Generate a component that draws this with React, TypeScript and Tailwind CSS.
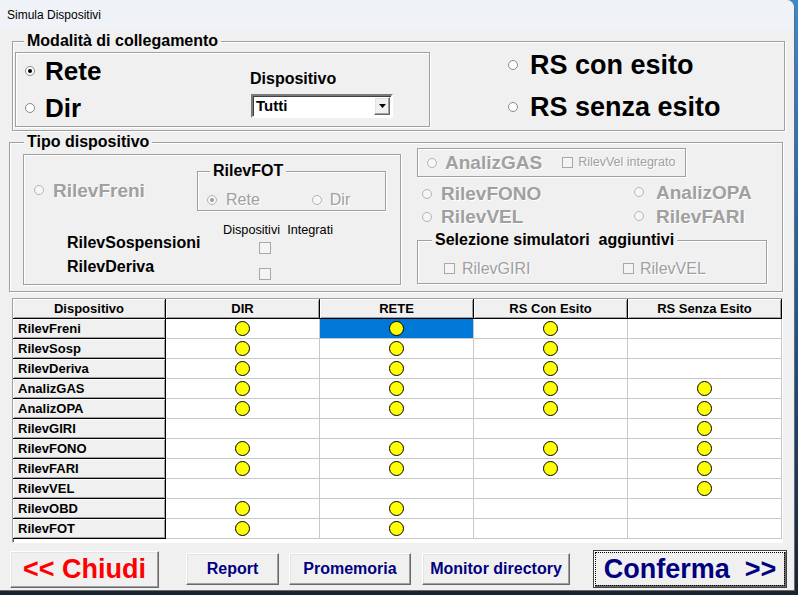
import React from 'react';

const etched = 'border border-[#a0a0a0] shadow-[1px_1px_0_#ffffff,inset_1px_1px_0_#ffffff]';
const bevel =
  'border border-t-white border-l-white border-r-[#696969] border-b-[#696969] bg-[#f0f0f0] shadow-[inset_-1px_-1px_0_#a0a0a0,inset_1px_1px_0_#e3e3e3]';
const grayText = 'text-[#a0a0a0] [text-shadow:1px_1px_0_#ffffff]';

function Radio({ checked = false, disabled = false }: { checked?: boolean; disabled?: boolean }) {
  return (
    <span
      className={`flex h-[10px] w-[10px] shrink-0 items-center justify-center rounded-full border ${
        disabled ? 'border-[#b4b4b4] bg-[#f6f6f6]' : 'border-[#8a8a8a] bg-white'
      }`}
    >
      {checked && (
        <span className={`h-[4px] w-[4px] rounded-full ${disabled ? 'bg-[#a0a0a0]' : 'bg-black'}`} />
      )}
    </span>
  );
}

function Check({ size = 'h-[12px] w-[12px]' }: { size?: string }) {
  return <span className={`block ${size} shrink-0 border border-[#a8a8a8] bg-[#f4f4f4]`} />;
}

function GroupLabel({ text, className }: { text: string; className: string }) {
  return (
    <span
      className={`absolute top-[-10px] whitespace-pre bg-[#f0f0f0] px-[3px] text-[16px] font-bold leading-[18px] text-black ${className}`}
    >
      {text}
    </span>
  );
}

// DIR, RETE, RS con esito, RS senza esito
const rows: [string, number, number, number, number][] = [
  ['RilevFreni', 1, 1, 1, 0],
  ['RilevSosp', 1, 1, 1, 0],
  ['RilevDeriva', 1, 1, 1, 0],
  ['AnalizGAS', 1, 1, 1, 1],
  ['AnalizOPA', 1, 1, 1, 1],
  ['RilevGIRI', 0, 0, 0, 1],
  ['RilevFONO', 1, 1, 1, 1],
  ['RilevFARI', 1, 1, 1, 1],
  ['RilevVEL', 0, 0, 0, 1],
  ['RilevOBD', 1, 1, 0, 0],
  ['RilevFOT', 1, 1, 0, 0],
];

const headers = ['Dispositivo', 'DIR', 'RETE', 'RS Con Esito', 'RS Senza Esito'];

export default function App() {
  return (
    <div className="h-[595px] w-[798px] overflow-hidden bg-linear-to-b from-[#3a8ad0] via-[#1f5a98] to-[#1a2230] font-['Liberation_Sans',Arial,sans-serif] text-black">
      <div className="flex h-[591px] w-[795px] flex-col rounded-tr-[8px] border-r border-b border-[#6a6a6a] bg-[#f0f0f0]">
        {/* barra del titolo */}
        <div className="flex h-[30px] shrink-0 items-center rounded-tr-[8px] bg-[#eff3f8] pl-[7px] text-[12px]">
          Simula Dispositivi
        </div>

        {/* Modalità di collegamento */}
        <div className={`relative ml-[12px] mt-[11px] flex h-[90px] w-[773px] shrink-0 ${etched}`}>
          <GroupLabel text="Modalità di collegamento" className="left-[11px]" />
          <div className={`ml-[2px] mt-[10px] flex h-[75px] w-[415px] ${etched}`}>
            <div className="flex w-[234px] flex-col">
              <div className="flex h-[37px] items-center">
                <span className="ml-[9px]">
                  <Radio checked />
                </span>
                <span className="ml-[10px] text-[26px] font-bold leading-none">Rete</span>
              </div>
              <div className="flex h-[37px] items-center">
                <span className="ml-[9px]">
                  <Radio />
                </span>
                <span className="ml-[10px] text-[26px] font-bold leading-none">Dir</span>
              </div>
            </div>
            <div className="flex flex-col pt-[18px]">
              <span className="text-[16px] font-bold leading-[16px]">Dispositivo</span>
              <div className="ml-[1px] mt-[7px] flex h-[24px] w-[142px] border-2 border-t-[#7a7a7a] border-l-[#7a7a7a] border-r-white border-b-white bg-white shadow-[inset_1px_1px_0_#404040]">
                <span className="flex-1 pl-[3px] text-[15px] font-bold leading-[20px]">Tutti</span>
                <span className={`mr-[1px] mt-[1px] flex h-[18px] w-[16px] items-center justify-center ${bevel}`}>
                  <svg width="7" height="4" viewBox="0 0 7 4">
                    <path d="M0 0h7L3.5 4z" fill="#000" />
                  </svg>
                </span>
              </div>
            </div>
          </div>
          <div className="ml-[78px] mt-[2px] flex flex-col">
            <div className="flex h-[42px] items-center">
              <Radio />
              <span className="ml-[12px] text-[27px] font-bold leading-none">RS con esito</span>
            </div>
            <div className="flex h-[42px] items-center">
              <Radio />
              <span className="ml-[12px] text-[27px] font-bold leading-none">RS senza esito</span>
            </div>
          </div>
        </div>

        {/* Tipo dispositivo */}
        <div className={`relative ml-[9px] mt-[11px] flex h-[150px] w-[774px] shrink-0 items-start ${etched}`}>
          <GroupLabel text="Tipo dispositivo" className="left-[14px]" />
          <div className={`ml-[13px] mt-[11px] flex h-[131px] w-[378px] flex-col ${etched}`}>
            <div className="flex h-[56px]">
              <div className="flex w-[173px] items-center pt-[14px]">
                <span className="ml-[10px]">
                  <Radio disabled />
                </span>
                <span className={`ml-[9px] text-[19px] font-bold leading-none ${grayText}`}>RilevFreni</span>
              </div>
              <div className={`relative mt-[16px] h-[40px] w-[189px] ${etched}`}>
                <GroupLabel text="RilevFOT" className="left-[12px]" />
                <div className="mt-[21px] flex h-[14px] items-center">
                  <span className="ml-[9px]">
                    <Radio checked disabled />
                  </span>
                  <span className={`ml-[9px] text-[16px] leading-none ${grayText}`}>Rete</span>
                  <span className="ml-[52px]">
                    <Radio disabled />
                  </span>
                  <span className={`ml-[8px] text-[16px] leading-none ${grayText}`}>Dir</span>
                </div>
              </div>
            </div>
            <div className="flex">
              <div className="flex w-[199px] flex-col pl-[43px] pt-[20px]">
                <span className="h-[24px] text-[16px] font-bold leading-[24px]">RilevSospensioni</span>
                <span className="h-[24px] text-[16px] font-bold leading-[24px]">RilevDeriva</span>
              </div>
              <div className="flex flex-col pt-[12px]">
                <span className="whitespace-pre text-[12.7px] leading-[14px]">Dispositivi  Integrati</span>
                <span className="ml-[36px] mt-[5px]">
                  <Check />
                </span>
                <span className="ml-[36px] mt-[14px]">
                  <Check />
                </span>
              </div>
            </div>
          </div>

          <div className="ml-[16px] mt-[5px] flex w-[350px] flex-col">
            <div className={`flex h-[29px] w-[269px] items-center ${etched}`}>
              <span className="ml-[9px]">
                <Radio disabled />
              </span>
              <span className={`ml-[8px] text-[19px] font-bold leading-none ${grayText}`}>AnalizGAS</span>
              <span className="ml-[20px]">
                <Check size="h-[11px] w-[11px]" />
              </span>
              <span className={`ml-[5px] text-[12.5px] leading-none ${grayText}`}>RilevVel integrato</span>
            </div>
            <div className="flex">
              <div className="mt-[5px] flex w-[217px] flex-col">
                <div className="flex h-[23px] items-center">
                  <span className="ml-[5px]">
                    <Radio disabled />
                  </span>
                  <span className={`ml-[9px] text-[19px] font-bold leading-none ${grayText}`}>RilevFONO</span>
                </div>
                <div className="flex h-[23px] items-center">
                  <span className="ml-[5px]">
                    <Radio disabled />
                  </span>
                  <span className={`ml-[9px] text-[19px] font-bold leading-none ${grayText}`}>RilevVEL</span>
                </div>
              </div>
              <div className="mt-[3px] flex flex-col">
                <div className="flex h-[24px] items-center">
                  <Radio disabled />
                  <span className={`ml-[12px] text-[19px] font-bold leading-none ${grayText}`}>AnalizOPA</span>
                </div>
                <div className="flex h-[24px] items-center">
                  <Radio disabled />
                  <span className={`ml-[12px] text-[19px] font-bold leading-none ${grayText}`}>RilevFARI</span>
                </div>
              </div>
            </div>
            <div className={`relative mt-[12px] h-[44px] w-[350px] ${etched}`}>
              <GroupLabel text="Selezione simulatori  aggiuntivi" className="left-[14px]" />
              <div className="mt-[22px] flex h-[11px] items-center">
                <div className="ml-[26px] flex w-[179px] items-center">
                  <Check size="h-[11px] w-[11px]" />
                  <span className={`ml-[7px] text-[16px] leading-none ${grayText}`}>RilevGIRI</span>
                </div>
                <Check size="h-[11px] w-[11px]" />
                <span className={`ml-[6px] text-[16px] leading-none ${grayText}`}>RilevVEL</span>
              </div>
            </div>
          </div>
        </div>

        {/* griglia dispositivi */}
        <div className="ml-[12px] mt-[6px] h-[245px] w-[771px] shrink-0 border border-t-[#a0a0a0] border-l-[#a0a0a0] border-r-white border-b-white bg-white shadow-[inset_1px_1px_0_#696969]">
          <div className="grid grid-cols-[153px_154px_154px_154px_154px]">
            {headers.map((h) => (
              <div
                key={h}
                className="flex h-[20px] items-center justify-center border-r border-b border-black bg-[#f0f0f0] text-[13px] font-bold shadow-[inset_1px_1px_0_#ffffff,inset_-1px_-1px_0_#a0a0a0]"
              >
                {h}
              </div>
            ))}
            {rows.map(([name, ...cells], r) => (
              <React.Fragment key={name}>
                <div className="flex h-[20px] items-center border-r border-b border-black bg-[#f0f0f0] pl-[5px] text-[13px] font-bold shadow-[inset_1px_1px_0_#ffffff,inset_-1px_-1px_0_#a0a0a0]">
                  {name}
                </div>
                {cells.map((on, c) => (
                  <div
                    key={c}
                    className={`flex h-[20px] items-center justify-center border-r border-b border-[#c8c8c8] ${
                      r === 0 && c === 1 ? 'bg-[#0078d7]' : 'bg-white'
                    }`}
                  >
                    {on === 1 && (
                      <span className="h-[15px] w-[15px] rounded-full border border-black bg-[#ffff00]" />
                    )}
                  </div>
                ))}
              </React.Fragment>
            ))}
          </div>
        </div>

        {/* pulsanti */}
        <div className="mt-[7px] flex h-[38px] shrink-0 items-center">
          <button className={`ml-[10px] flex h-[37px] w-[149px] items-center justify-center text-[27px] font-bold leading-none text-[#ff0000] ${bevel}`}>
            &lt;&lt; Chiudi
          </button>
          <button className={`ml-[27px] h-[32px] w-[93px] text-[16px] font-bold text-[#000080] ${bevel}`}>
            Report
          </button>
          <button className={`ml-[10px] h-[32px] w-[122px] text-[16px] font-bold text-[#000080] ${bevel}`}>
            Promemoria
          </button>
          <button className={`ml-[11px] h-[32px] w-[148px] text-[16px] font-bold text-[#000080] ${bevel}`}>
            Monitor directory
          </button>
          <button className="ml-[23px] flex h-[38px] w-[194px] items-center justify-center border border-[#404040] bg-[#f0f0f0] p-[1px] shadow-[inset_1px_1px_0_#ffffff,inset_-2px_-2px_0_#696969]">
            <span className="flex h-full w-full items-center justify-center border border-dotted border-black whitespace-pre text-[27px] font-bold leading-none text-[#000080]">
              Conferma  &gt;&gt;
            </span>
          </button>
        </div>
      </div>
    </div>
  );
}
